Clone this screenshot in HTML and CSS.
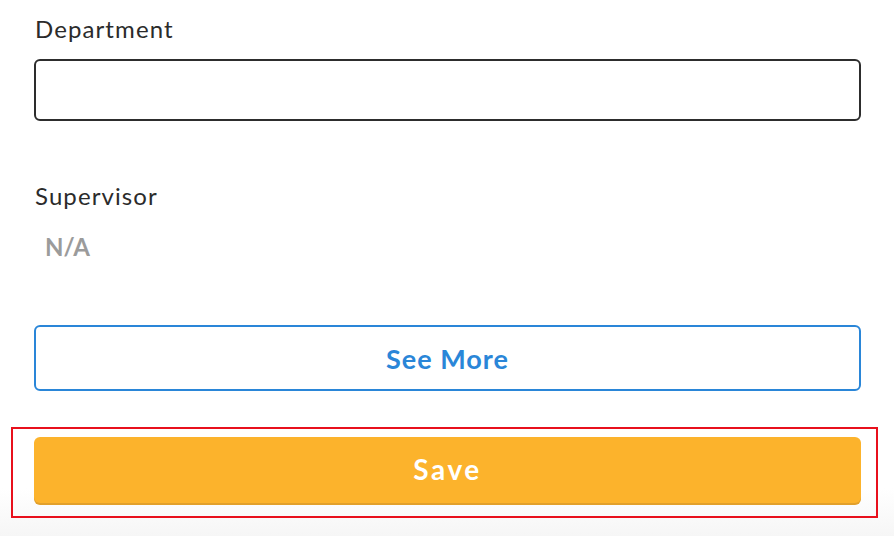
FILE: index.html
```html
<!DOCTYPE html>
<html lang="en">
<head>
  <meta charset="UTF-8" />
  <meta name="viewport" content="width=device-width, initial-scale=1.0" />
  <title>Profile</title>
  <link rel="stylesheet" href="styles.css">
</head>
<body>
  <form class="profile-form">
    <!-- Department -->
    <label class="field-label" for="department">Department</label>
    <input class="text-input" type="text" id="department" name="department">

    <!-- Supervisor (read only) -->
    <div class="field-label supervisor">Supervisor</div>
    <div class="field-value">N/A</div>

    <button type="button" class="btn btn-outline">See More</button>

    <div class="highlight">
      <button type="submit" class="btn btn-save">Save</button>
    </div>
  </form>
</body>
</html>
```

FILE: styles.css
```css
html, body {
  margin: 0;
  height: 100%;
}

body {
  font-family: Lato, "Noto Sans", sans-serif;
  color: #2b2b2b;
  background: linear-gradient(to bottom, #fff 0, #fff 488px, #f6f6f6 536px);
}

.profile-form {
  display: flex;
  flex-direction: column;
  padding: 15px 33px 0 34px;
}

.field-label {
  display: block;
  font-size: 24px;
  line-height: 28px;
  letter-spacing: 1.1px;
  margin-left: 1px;
}

.text-input {
  margin-top: 16px;
  height: 62px;
  box-sizing: border-box;
  border: 2px solid #2d2d2d;
  border-radius: 6px;
  padding: 0 14px;
  font: inherit;
  font-size: 22px;
  outline: none;
}

.supervisor {
  margin-top: 61px;
}

.field-value {
  margin: 23px 0 0 11px;
  font-size: 24px;
  line-height: 28px;
  font-weight: 700;
  color: #9b9b9b;
}

.btn {
  display: block;
  width: 100%;
  height: 66px;
  border-radius: 6px;
  font-family: inherit;
  font-size: 27px;
  font-weight: 700;
  letter-spacing: 1px;
  cursor: pointer;
}

.btn-outline {
  margin-top: 64px;
  background: #fff;
  border: 2px solid #2a86d8;
  color: #2a86d8;
}

/* red annotation box round the save button */
.highlight {
  margin: 36px -17px 0 -23px;
  padding: 8px 15px 13px 21px;
  border: 2px solid #e8101c;
}

.btn-save {
  border: none;
  background: #fcb32c;
  color: #fff;
  font-size: 28px;
  letter-spacing: 2.5px;
  padding-bottom: 4px;
  box-shadow: 0 2px 0 #e2a02b;
}
```
